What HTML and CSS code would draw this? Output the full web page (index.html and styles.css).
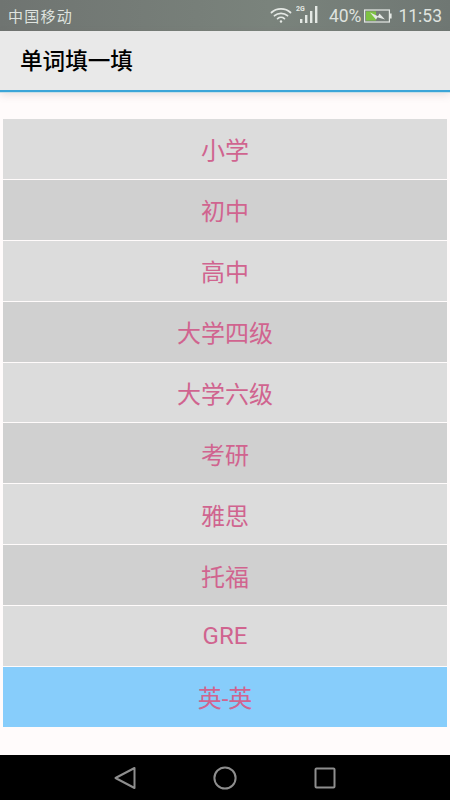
FILE: index.html
```html
<!DOCTYPE html>
<html lang="zh">
<head>
<meta charset="utf-8">
<title>单词填一填</title>
<link rel="stylesheet" href="styles.css">
</head>
<body>
<div class="phone">
  <header class="status">
    <span class="carrier">中国移动</span>
    <div class="status-right">
      <svg class="wifi" width="22" height="18" viewBox="0 0 22 18" fill="none" stroke="#e4e8e4" stroke-width="1.8" stroke-linecap="round">
        <path d="M1.5 6.5C6.5 1.6 15.5 1.6 20.5 6.5"/>
        <path d="M4.5 9.7C8 6.5 14 6.5 17.5 9.7"/>
        <path d="M7.6 12.6C9.5 11 12.5 11 14.4 12.6"/>
        <circle cx="11" cy="15.5" r="1.2" fill="#e4e8e4" stroke="none"/>
      </svg>
      <svg class="signal" width="25" height="20" viewBox="0 0 25 20">
        <text x="0" y="7" class="two-g">2G</text>
        <rect x="4" y="15" width="2.4" height="4" fill="#e4e8e4"/>
        <rect x="9" y="11" width="2.4" height="8" fill="#e4e8e4"/>
        <rect x="14" y="7" width="2.4" height="12" fill="#e4e8e4"/>
        <rect x="19" y="2" width="2.4" height="17" fill="#e4e8e4"/>
      </svg>
      <span class="pct">40%</span>
      <svg class="battery" width="28" height="14" viewBox="0 0 28 14">
        <rect x="0.6" y="1" width="24.8" height="12" fill="none" stroke="#e4e8e4" stroke-width="1.2"/>
        <rect x="2" y="2.4" width="10" height="9.2" fill="#7dc242"/>
        <rect x="26" y="4.5" width="1.6" height="5" fill="#e4e8e4"/>
        <path d="M6 3.5L14 7.2L15.5 4.5L21 10.5L13.5 8.2L12 10.5Z" fill="#e4e8e4"/>
      </svg>
      <span class="time">11:53</span>
    </div>
  </header>
  <div class="appbar"><h1 class="title">单词填一填</h1></div>
  <main class="content">
    <ul class="levels">
      <li class="level">小学</li>
      <li class="level alt">初中</li>
      <li class="level">高中</li>
      <li class="level alt">大学四级</li>
      <li class="level">大学六级</li>
      <li class="level alt">考研</li>
      <li class="level">雅思</li>
      <li class="level alt">托福</li>
      <li class="level">GRE</li>
      <li class="level active">英-英</li>
    </ul>
  </main>
  <nav class="navbar">
    <svg width="22" height="24" viewBox="0 0 22 24" fill="none" stroke="#8e8e8e" stroke-width="2" stroke-linejoin="round"><path d="M20.5 2V22L1.5 12Z"/></svg>
    <svg width="24" height="24" viewBox="0 0 24 24" fill="none" stroke="#8e8e8e" stroke-width="2"><circle cx="12" cy="12" r="10.6"/></svg>
    <svg width="22" height="22" viewBox="0 0 22 22" fill="none" stroke="#8e8e8e" stroke-width="2"><rect x="1.5" y="1.5" width="19" height="19" rx="1"/></svg>
  </nav>
</div>
</body>
</html>
```
FILE: styles.css
```css
* { box-sizing: border-box; }
html, body { margin: 0; padding: 0; }
body { font-family: Roboto, "Noto Sans CJK SC", sans-serif; background: #fffbfb; }
.phone { width: 450px; height: 800px; display: flex; flex-direction: column; overflow: hidden; }

.status {
  height: 31px;
  flex: none;
  display: flex;
  align-items: center;
  justify-content: space-between;
  padding: 0 8px;
  background: linear-gradient(90deg, #6f7471 0%, #7a837c 60%, #6f7773 100%);
  color: #dfe3df;
}
.carrier { font-size: 15px; letter-spacing: 1.25px; }
.status-right { display: flex; align-items: center; }
.wifi { margin-right: 4px; margin-top: -2px; }
.signal { margin-right: 8px; margin-top: -4px; }
.two-g { font: bold 7px Roboto, sans-serif; fill: #e4e8e4; }
.pct { font-size: 17.5px; margin-right: 3px; }
.battery { margin-right: 6px; }
.time { font-size: 17.5px; }

.appbar {
  height: 61px;
  flex: none;
  display: flex;
  align-items: center;
  padding: 0 20px 2px;
  background: #e9e9e9;
  border-bottom: 2px solid #3ba5d8;
  box-shadow: 0 1px 0 #c9dfe6, 0 3px 8px rgba(120, 100, 100, 0.18);
}
.title { margin: 0; font-size: 22.6px; font-weight: 500; color: #000; }

.content { flex: 1; padding: 27px 3px 0; }
.levels { list-style: none; margin: 0; padding: 0; display: flex; flex-direction: column; gap: 1px; }
.level {
  height: 59.9px;
  display: flex;
  align-items: center;
  justify-content: center;
  background: #dcdcdc;
  color: #d0648f;
  font-size: 24px;
}
.alt { background: #d0d0d0; }
.active { background: #87cdfb; }

.navbar {
  height: 45px;
  flex: none;
  background: #000;
  display: flex;
  align-items: center;
  justify-content: center;
  gap: 77px;
}
```
